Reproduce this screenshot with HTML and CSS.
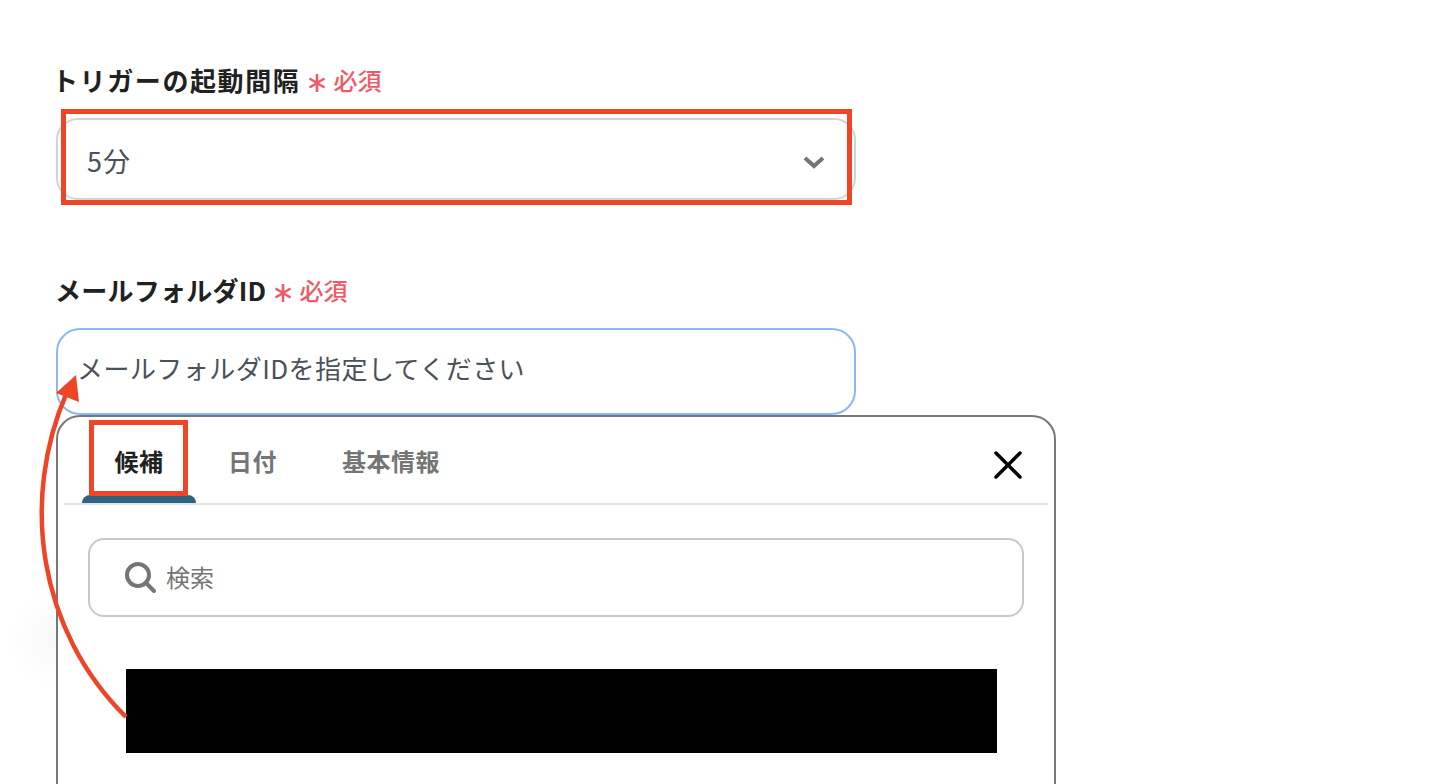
FILE: index.html
```html
<!DOCTYPE html>
<html lang="ja">
<head>
    <meta charset="UTF-8">
    <title>トリガーの起動間隔</title>
    <link rel="stylesheet" href="styles.css">
</head>
<body>
    <div class="glow"></div>
    <div class="form">
        <div class="field-label first-label">
            <span class="label-text">トリガーの起動間隔</span>
            <svg class="asterisk" width="18" height="20" viewBox="0 0 18 20">
                <path d="M9 1 V19 M1.5 5.5 L16.5 14.5 M16.5 5.5 L1.5 14.5" fill="none" stroke="#ee5a65" stroke-width="2.6"/>
            </svg>
            <span class="required">必須</span>
        </div>
        <div class="select-box">
            <span>5分</span>
            <svg class="chevron" width="24" height="16" viewBox="0 0 24 16">
                <path d="M3 3 L12 11 L21 3" fill="none" stroke="#757575" stroke-width="4"/>
            </svg>
        </div>

        <div class="field-label second-label">
            <span class="label-text">メールフォルダID</span>
            <svg class="asterisk" width="18" height="20" viewBox="0 0 18 20">
                <path d="M9 1 V19 M1.5 5.5 L16.5 14.5 M16.5 5.5 L1.5 14.5" fill="none" stroke="#ee5a65" stroke-width="2.6"/>
            </svg>
            <span class="required">必須</span>
        </div>
        <div class="text-input">メールフォルダIDを指定してください</div>

        <div class="popup">
            <div class="tabs">
                <div class="tab active">候補</div>
                <div class="tab">日付</div>
                <div class="tab">基本情報</div>
                <svg class="close" width="30" height="30" viewBox="0 0 30 30">
                    <path d="M3 3 L27 27 M27 3 L3 27" fill="none" stroke="#000" stroke-width="3.5" stroke-linecap="round"/>
                </svg>
            </div>
            <div class="search-box">
                <svg width="32" height="32" viewBox="0 0 32 32">
                    <circle cx="13" cy="13" r="11" fill="none" stroke="#757575" stroke-width="4"/>
                    <path d="M21 21 L29 29" fill="none" stroke="#757575" stroke-width="4" stroke-linecap="round"/>
                </svg>
                <span class="search-text">検索</span>
            </div>
            <div class="redacted"></div>
        </div>
    </div>

    <!-- annotations on top of the capture -->
    <div class="mark mark-select"></div>
    <div class="mark mark-tab"></div>
    <svg class="arrow" width="1446" height="784" viewBox="0 0 1446 784">
        <path d="M126 717 C38 630 20 500 67 392" fill="none" stroke="#ee4527" stroke-width="4.5"/>
        <path d="M76 375 L56 393 L79 402 Z" fill="#ee4527"/>
    </svg>
</body>
</html>
```

FILE: styles.css
```css
html, body {
    margin: 0;
    height: 784px;
    overflow: hidden;
    background-color: #fff;
}
body {
    font-family: "Noto Sans CJK JP", "Noto Sans", sans-serif;
    position: relative;
}
.glow {
    position: absolute;
    left: 8px;
    top: 590px;
    width: 100px;
    height: 100px;
    background: radial-gradient(closest-side, #f6f8f7, #fff);
}
.form {
    width: 800px;
    margin-left: 56px;
    position: relative;
}
.field-label {
    display: flex;
    align-items: center;
    height: 36px;
}
.first-label {
    padding-top: 61px;
    margin-left: -4px;
}
.first-label .label-text {
    letter-spacing: 1.6px;
}
.second-label {
    margin-top: 71px;
    margin-left: -1px;
}
.second-label .label-text {
    letter-spacing: 0.25px;
}
.label-text {
    font-size: 26px;
    font-weight: 700;
    color: #212121;
}
.asterisk {
    margin: 8px 0 0 8px;
}
.required {
    font-size: 24px;
    font-weight: 500;
    color: #ee5a65;
    margin-left: 7px;
}
.select-box {
    box-sizing: border-box;
    height: 82px;
    margin-top: 21px;
    padding: 2px 28px 0 29px;
    display: flex;
    align-items: center;
    justify-content: space-between;
    border: 2px solid #d0d4d9;
    border-radius: 22px;
    font-size: 27px;
    letter-spacing: 1px;
    color: #4b5158;
}
.chevron {
    margin-top: 6px;
}
.text-input {
    box-sizing: border-box;
    height: 87px;
    margin-top: 21px;
    padding: 0 19px 8px;
    display: flex;
    align-items: center;
    border: 2px solid #8ab8f5;
    border-radius: 24px;
    font-size: 26px;
    letter-spacing: 0.45px;
    color: #4b5158;
}
.popup {
    box-sizing: border-box;
    width: 1000px;
    height: 500px;
    padding: 0 6px;
    border: 2px solid #777;
    border-radius: 24px;
    background-color: #fff;
}
.tabs {
    height: 86px;
    display: flex;
    align-items: center;
    gap: 65px;
    padding-left: 18px;
    border-bottom: 2px solid #e2e2e2;
    position: relative;
}
.tab {
    font-size: 24px;
    font-weight: 700;
    letter-spacing: 0.5px;
    color: #757575;
    min-width: 48px;
    text-align: center;
}
.tab.active {
    width: 114px;
    color: #212121;
    margin-right: -33px;
    line-height: 88px;
    height: 86px;
    position: relative;
}
.tab.active::after {
    content: "";
    position: absolute;
    left: 0;
    right: 0;
    bottom: 0;
    height: 8px;
    background-color: #2a6480;
    border-radius: 8px 8px 0 0;
}
.close {
    margin-left: auto;
    margin-right: 25px;
    margin-top: 10px;
}
.search-box {
    box-sizing: border-box;
    height: 79px;
    margin: 33px 24px 0;
    padding-left: 35px;
    display: flex;
    align-items: center;
    gap: 9px;
    border: 2px solid #c8c8c8;
    border-radius: 16px;
    font-size: 24px;
    color: #757575;
}
.search-text {
    margin-top: -2px;
}
.redacted {
    width: 871px;
    height: 84px;
    margin: 52px 0 0 62px;
    background-color: #000;
}
.mark {
    position: absolute;
    box-sizing: border-box;
    border: 5px solid #ee4527;
}
.mark-select {
    left: 61px;
    top: 109px;
    width: 791px;
    height: 96px;
}
.mark-tab {
    left: 89px;
    top: 420px;
    width: 99px;
    height: 76px;
}
.arrow {
    position: absolute;
    left: 0;
    top: 0;
}
```
